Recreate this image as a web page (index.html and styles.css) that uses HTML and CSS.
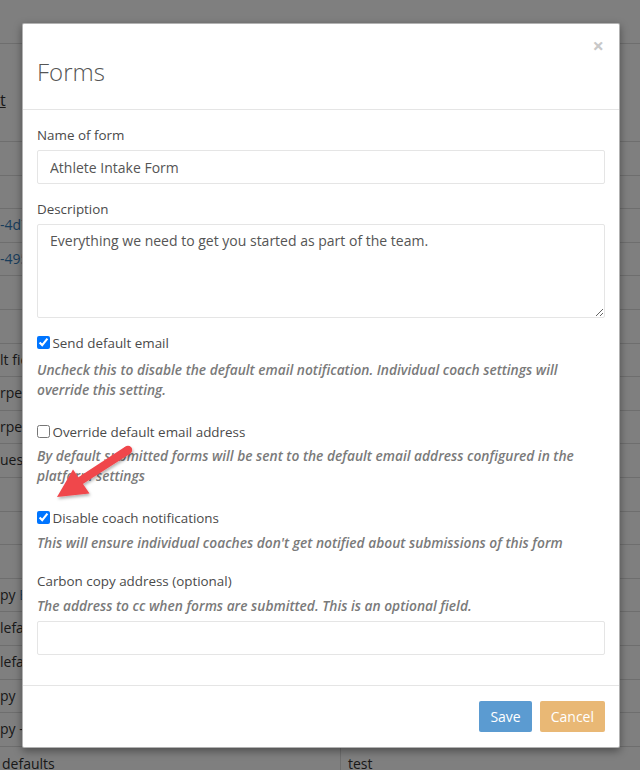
FILE: index.html
```html
<!DOCTYPE html>
<html>
<head>
    <title>Forms</title>
    <link rel="stylesheet" href="styles.css">
</head>
<body>
    <!-- page behind the dialog -->
    <div class="page">
        <div class="page-title">t</div>
        <div class="rows">
            <div class="row"></div>
            <div class="row"></div>
            <div class="row"><span class="link">-4d7e-9a1c</span></div>
            <div class="row"><span class="link">-495b-8f20</span></div>
            <div class="row"></div>
            <div class="row"></div>
            <div class="row">lt fields</div>
            <div class="row">rpes</div>
            <div class="row">rpes</div>
            <div class="row">ues</div>
            <div class="row"></div>
            <div class="row"></div>
            <div class="row"></div>
            <div class="row">py <span class="link">Email</span></div>
            <div class="row">lefaults</div>
            <div class="row">lefaults</div>
            <div class="row">py</div>
            <div class="row">py - defaults</div>
            <div class="row row-split">
                <div class="cell">defaults</div>
                <div class="cell cell-right">test</div>
            </div>
        </div>
    </div>

    <div class="backdrop"></div>

    <div class="modal">
        <div class="modal-header">
            <span class="close">&times;</span>
            <h4 class="modal-title">Forms</h4>
        </div>

        <div class="modal-body">
            <div class="form-group">
                <label class="control-label">Name of form</label>
                <input type="text" class="form-control" value="Athlete Intake Form">
            </div>

            <div class="form-group">
                <label class="control-label">Description</label>
                <textarea class="form-control textarea">Everything we need to get you started as part of the team.</textarea>
            </div>

            <div class="check-group">
                <label class="check-label"><input type="checkbox" checked> Send default email</label>
                <p class="help-block help-first">Uncheck this to disable the default email notification. Individual coach settings will override this setting.</p>
            </div>

            <div class="check-group">
                <label class="check-label"><input type="checkbox"> Override default email address</label>
                <p class="help-block help-close">By default submitted forms will be sent to the default email address configured in the platform settings</p>
            </div>

            <div class="check-group check-last">
                <label class="check-label"><input type="checkbox" checked> Disable coach notifications</label>
                <p class="help-block">This will ensure individual coaches don't get notified about submissions of this form</p>
            </div>

            <div class="form-group">
                <label class="control-label">Carbon copy address (optional)</label>
                <p class="help-block help-tight">The address to cc when forms are submitted. This is an optional field.</p>
                <input type="text" class="form-control">
            </div>
        </div>

        <div class="modal-footer">
            <button class="btn btn-save">Save</button>
            <button class="btn btn-cancel">Cancel</button>
        </div>
    </div>

    <!-- annotation arrow drawn over the screenshot -->
    <svg class="arrow" width="640" height="770" viewBox="0 0 640 770">
        <defs>
            <filter id="shadow" x="-20%" y="-20%" width="140%" height="140%">
                <feDropShadow dx="1" dy="2" stdDeviation="1.5" flood-color="#000" flood-opacity="0.3"/>
            </filter>
        </defs>
        <g filter="url(#shadow)" fill="#f0464c">
            <path d="M125.5 446.5 L130.5 453.5 L82 484.5 L78 477.5 Z"/>
            <circle cx="128" cy="450" r="4.2"/>
            <polygon points="57,497 73,469.5 89.5,493.5"/>
        </g>
    </svg>
</body>
</html>
```

FILE: styles.css
```css
*
{
    box-sizing: border-box;
}

body
{
    margin: 0;
    width: 640px;
    height: 770px;
    overflow: hidden;
    background: #fff;
    font-family: "Open Sans", "Liberation Sans", sans-serif;
    font-size: 14px;
    color: #333;
}

/* background page */

.page
{
    height: 770px;
    border-top: 1px solid transparent;
}

.page-title
{
    height: 98px;
    margin-top: 42px;
    border-top: 1px solid #ddd;
    padding: 46px 0 0 0;
    font-size: 16px;
    line-height: 20px;
    text-decoration: underline;
}

.row
{
    height: 33.6px;
    border-top: 1px solid #ddd;
    padding: 6px 0 0 0;
    line-height: 20px;
    white-space: nowrap;
}

.row-split
{
    display: flex;
    padding: 0;
}

.cell
{
    flex: none;
    width: 341px;
    padding: 7px 0 0 2px;
    border-right: 1px solid #ddd;
}

.cell-right
{
    flex: 1;
    border-right: none;
    padding-left: 7px;
}

.link
{
    color: #337ab7;
}

.backdrop
{
    position: absolute;
    top: 0;
    left: 0;
    width: 640px;
    height: 770px;
    background: rgba(0, 0, 0, 0.5);
}

/* dialog */

.modal
{
    position: absolute;
    top: 23px;
    left: 22px;
    width: 598px;
    background: #fff;
    border: 1px solid rgba(0, 0, 0, 0.3);
    border-radius: 2px;
    box-shadow: 0 3px 9px rgba(0, 0, 0, 0.4);
}

.modal-header
{
    position: relative;
    padding: 31px 14px 20px 14px;
    border-bottom: 1px solid #e5e5e5;
}

.modal-title
{
    margin: 0;
    font-size: 24px;
    font-weight: 300;
    line-height: 34px;
    color: #555;
}

.close
{
    position: absolute;
    top: 12px;
    right: 15px;
    font-size: 20px;
    font-weight: bold;
    line-height: 1;
    color: #c8c8c8;
}

.modal-body
{
    padding: 15px 14px;
}

.form-group
{
    margin-bottom: 15px;
}

.control-label
{
    display: block;
    margin-bottom: 5px;
    font-size: 13.4px;
    font-weight: 400;
    line-height: 20px;
    color: #4a4a4a;
}

.form-control
{
    display: block;
    width: 100%;
    height: 34px;
    padding: 6px 12px;
    font-family: "Open Sans", "Liberation Sans", sans-serif;
    font-size: 14px;
    line-height: 20px;
    color: #555;
    background: #fff;
    border: 1px solid #e5e5e5;
    border-radius: 2px;
    outline: none;
}

.textarea
{
    height: 94px;
    resize: vertical;
}

.check-group
{
    margin-bottom: 22px;
}

.check-last
{
    margin-bottom: 18px;
}

.check-label
{
    display: block;
    font-size: 13.4px;
    font-weight: 400;
    line-height: 20px;
    color: #4a4a4a;
}

.check-label input
{
    margin: 0 -1px 0 0;
    width: 13px;
    height: 13px;
    vertical-align: -1px;
}

.help-block
{
    margin: 5px 0 0 0;
    font-style: italic;
    font-weight: 600;
    font-size: 13.75px;
    line-height: 20px;
    color: #7a7a7a;
}

.help-first
{
    margin-top: 7px;
}

.help-close
{
    margin-top: 4px;
}

.help-tight
{
    margin: 0 0 5px 0;
}

.modal-footer
{
    padding: 15px 14px;
    border-top: 1px solid #e5e5e5;
    display: flex;
    justify-content: flex-end;
    gap: 8px;
}

.btn
{
    height: 31px;
    padding: 0 11px;
    border: none;
    border-radius: 2px;
    font-family: "Open Sans", "Liberation Sans", sans-serif;
    font-size: 14px;
    color: #fff;
}

.btn-save
{
    background: #5b9bd1;
}

.btn-cancel
{
    background: #e9b875;
}

.arrow
{
    position: absolute;
    top: 0;
    left: 0;
}
```
